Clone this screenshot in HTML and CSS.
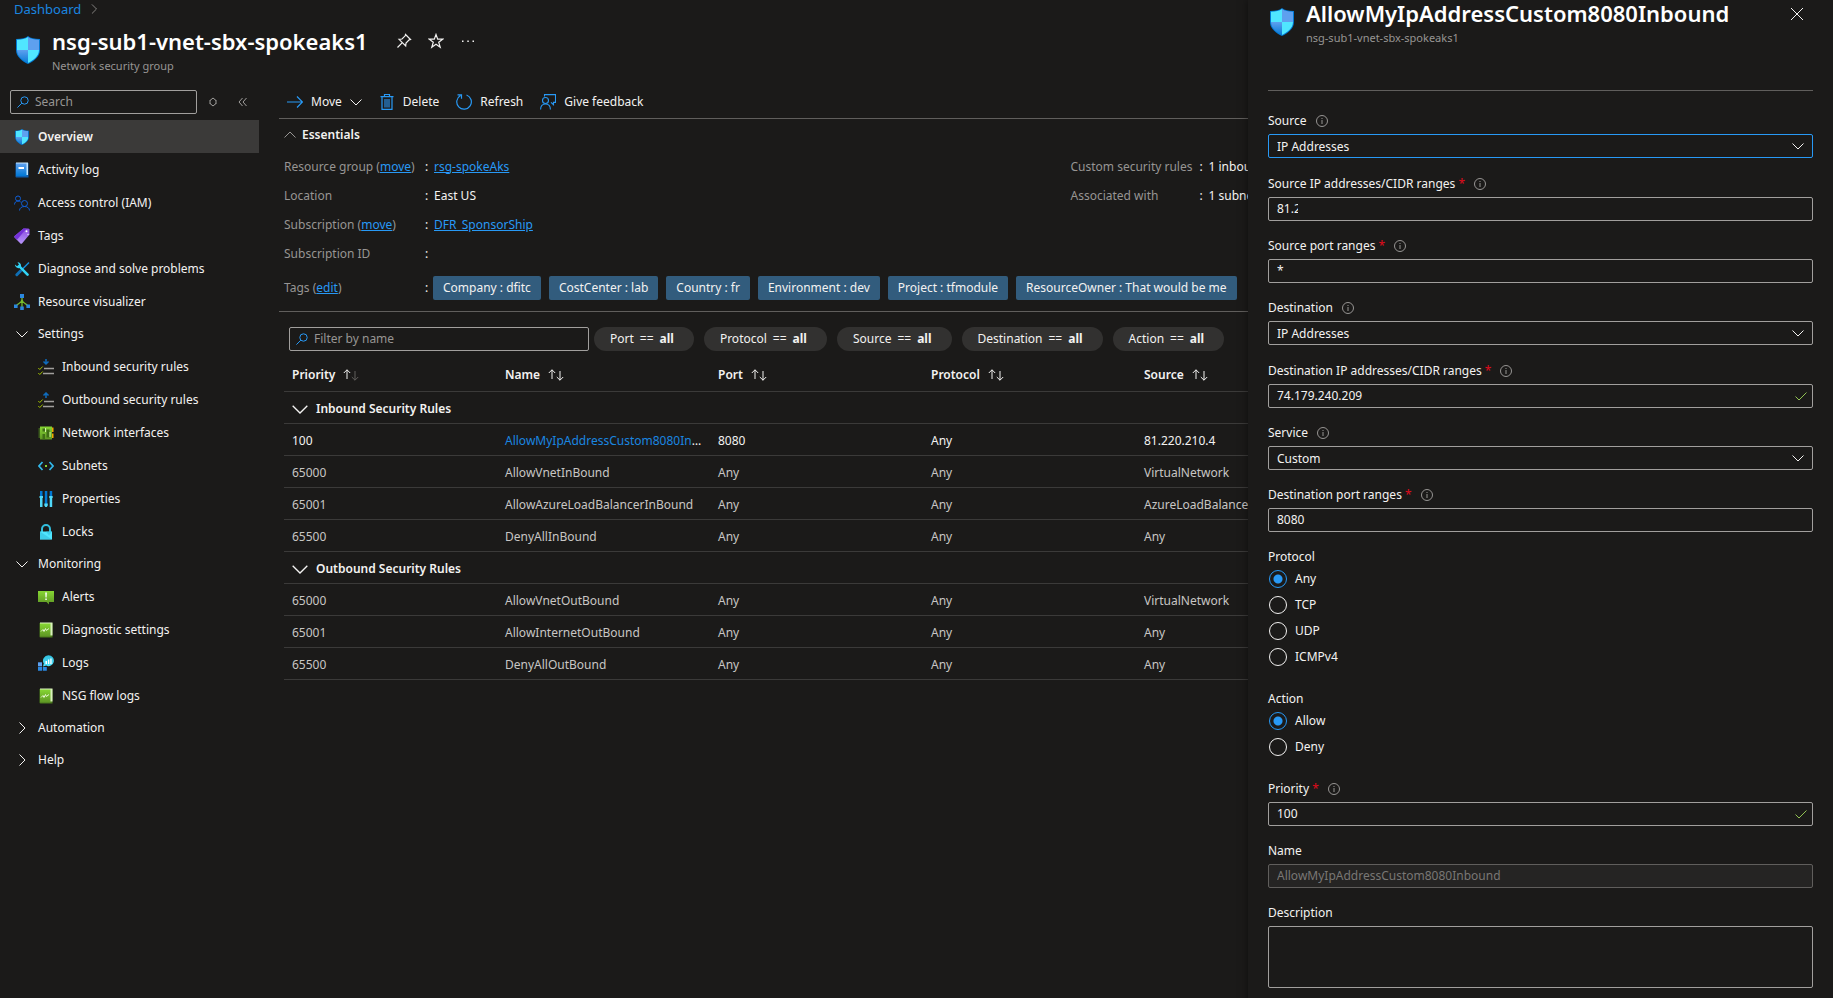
FILE: index.html
```html
<!DOCTYPE html>
<html lang="en">
<head>
    <meta charset="UTF-8">
    <title>nsg-sub1-vnet-sbx-spokeaks1</title>
    <link rel="stylesheet" href="styles.css">
</head>
<body>
<!-- icon sprite -->
<svg class="sprite" aria-hidden="true">
    <defs>
        <linearGradient id="g-blue" x1="0" y1="0" x2="0" y2="1">
            <stop offset="0" stop-color="#5ea0ef"/><stop offset="1" stop-color="#0078d4"/>
        </linearGradient>
        <linearGradient id="g-green" x1="0" y1="0" x2="0" y2="1">
            <stop offset="0" stop-color="#86d633"/><stop offset="1" stop-color="#5e9624"/>
        </linearGradient>
        <linearGradient id="g-purple" x1="0" y1="0" x2="0" y2="1">
            <stop offset="0" stop-color="#8a4be0"/><stop offset="1" stop-color="#b796f9"/>
        </linearGradient>
        <linearGradient id="g-cyan" x1="0" y1="0" x2="0" y2="1">
            <stop offset="0" stop-color="#32bedd"/><stop offset="1" stop-color="#50e6ff"/>
        </linearGradient>
        <clipPath id="shield-clip">
            <path d="M12 1c2.600 2 6 2.600 11 2.700V14c0 6.500-6 10.500-11 13C7 24.500 1 20.500 1 14V3.700C6 3.600 9.400 3 12 1z"/>
        </clipPath>
    </defs>
    <symbol id="i-shield" viewBox="0 0 24 28">
        <path fill="#0078d4" d="M12 0c2.700 2.200 6.300 2.900 12 3v11c0 7-6.500 11.300-12 14C6.500 25.300 0 21 0 14V3c5.700-.1 9.300-.8 12-3z"/>
        <g clip-path="url(#shield-clip)">
            <path fill="#50e6ff" d="M0 0h12v14H0z"/>
            <path fill="#5ea0ef" d="M12 0h12v14H12z"/>
            <path fill="url(#g-blue)" d="M0 14h12v14H0z"/>
            <path fill="#50e6ff" d="M12 14h12v14H12z"/>
        </g>
    </symbol>
    <symbol id="i-book" viewBox="0 0 16 16">
        <path fill="#0f5fb0" d="M1.500 1h13v14.500h-12a1 1 0 0 1-1-1z"/>
        <path fill="#c3e4fb" d="M2 .5h12V13H2z"/>
        <path fill="url(#g-blue)" d="M2 1.500h10.500V14H2z"/>
        <path fill="#fff" d="M4.500 5h5.500v2H4.500z"/>
    </symbol>
    <symbol id="i-people" viewBox="0 0 16 16">
        <g fill="none" stroke="#0f5fd8">
            <circle cx="4" cy="3.500" r="2.500"/><path d="M.5 9.500C.5 7.500 2 6 4 6c1.200 0 2 .4 2.700 1"/>
            <circle cx="10.500" cy="8.500" r="3"/><path d="M5.500 15.500c0-2.400 2.200-4 5-4s5 1.600 5 4"/>
        </g>
    </symbol>
    <symbol id="i-tag" viewBox="0 0 16 16">
        <path fill="url(#g-purple)" d="M9.500.5h5l1 1v5L8 15.500a1.200 1.200 0 0 1-1.600 0L.6 9.600a1.200 1.200 0 0 1 0-1.600z"/>
        <path fill="#7431d8" d="M9.500.5h3L3 11.700.6 9.300a1 1 0 0 1 0-1.300z"/>
        <circle cx="12.500" cy="3.300" r="1" fill="#fff"/><circle cx="14" cy="6.500" r=".7" fill="#e4d8fb"/>
    </symbol>
    <symbol id="i-tools" viewBox="0 0 16 16">
        <path stroke="#1490df" stroke-width="1.500" d="M15 1.500L8 8.500"/>
        <path stroke="#0f6fb5" stroke-width="3" stroke-linecap="round" d="M6.500 10L2.800 13.700"/>
        <path fill="#32d4f5" d="M1 3.500l2 1.700L5 3.500 3.500 1.200A3.400 3.400 0 0 1 7 5.300l7.500 7.400a1.300 1.300 0 0 1-1.900 1.900L5.300 7A3.400 3.400 0 0 1 1 3.500z"/>
    </symbol>
    <symbol id="i-tree" viewBox="0 0 16 16">
        <path fill="none" stroke="#76bc2d" stroke-width="1.300" d="M8 3v10M8 5.500C7.500 9 5 9 2.500 11.500M8 5.500C8.500 9 11 9 13.500 11.500"/>
        <path fill="#2b88e0" d="M6 0h4v4H6zM0 10.500h3.600v3.600H0zM6.200 12.400h3.600V16H6.200zM12.400 10.500H16v3.600h-3.600z"/>
    </symbol>
    <symbol id="i-inbound" viewBox="0 0 16 16">
        <path stroke="#0f6cbd" stroke-width="1.500" fill="none" d="M8 0v5M5.500 2.500L8 5l2.500-2.500"/>
        <path stroke="#a19f9d" stroke-width="1.300" d="M6 9.500h10M5 14.500h11"/>
        <path stroke="#a4c400" fill="none" d="M.3 9l1.500 1.500L4.700 7.500M.3 14l1.500 1.500 2.900-3"/>
    </symbol>
    <symbol id="i-outbound" viewBox="0 0 16 16">
        <path stroke="#0f6cbd" stroke-width="1.500" fill="none" d="M8 6V1M5.500 3.500L8 1l2.500 2.500"/>
        <path stroke="#a19f9d" stroke-width="1.300" d="M6 9.500h10M5 14.500h11"/>
        <path stroke="#a4c400" fill="none" d="M.3 9l1.500 1.500L4.700 7.500M.3 14l1.500 1.500 2.900-3"/>
    </symbol>
    <symbol id="i-nic" viewBox="0 0 16 16">
        <path fill="#3b5a1c" d="M.5 3h1.500v10H.5z"/>
        <path fill="#f2a900" d="M13 2.500h2.500V7H13zM13 8.500h2.500V13H13z"/>
        <path fill="url(#g-green)" d="M2 1.500h12v13H2z"/>
        <path fill="#3f6f16" d="M4.500 3.500H7v3H4.500zM8.500 4.500h3v8h-3zM4.500 9H7v5.500H4.500z"/>
        <path stroke="#d7f5a8" d="M7.500 3v4M12 7v5"/>
    </symbol>
    <symbol id="i-subnet" viewBox="0 0 16 16">
        <path fill="none" stroke="#32b8ea" stroke-width="1.700" d="M4.500 4L1 8l3.500 4M11.500 4L15 8l-3.500 4"/>
        <path fill="#86d633" d="M7 7h2v2H7z"/>
    </symbol>
    <symbol id="i-props" viewBox="0 0 16 16">
        <path fill="#0078d4" d="M2 0h2.500v5H2zM6.800 0h2.500v13H6.800zM11.700 0h2.500v5h-2.500z"/>
        <path fill="#50d8f8" d="M2 6h2.500v10H2zM11.700 6h2.500v10h-2.500zM1.500 5h3.500v2H1.500zM11.200 5h3.500v2h-3.500zM6.300 12.500h3.500v2l-1 1.500H7.300l-1-1.500z"/>
    </symbol>
    <symbol id="i-lock" viewBox="0 0 16 16">
        <path fill="none" stroke="#32bedd" stroke-width="2" d="M4 8V5a4 4 0 0 1 8 0v3"/>
        <path fill="#50e6ff" d="M2 7.500h12v8H2z"/>
        <path fill="#32bedd" d="M2 7.500l12 8H2zM14 7.500h-6l3 4z" opacity=".6"/>
    </symbol>
    <symbol id="i-alert" viewBox="0 0 16 16">
        <path fill="url(#g-green)" d="M0 2h16v11h-5v2.500L8.500 13H0z"/>
        <path fill="#fff" d="M7.200 3.500h1.700l-.3 5h-1.100zM7.300 9.500h1.500V11H7.300z"/>
    </symbol>
    <symbol id="i-diag" viewBox="0 0 16 16">
        <path fill="#4b7a1d" d="M1.500 1h13v14.500h-12a1 1 0 0 1-1-1z"/>
        <path fill="#d9f0bd" d="M2 .5h12.500v13H2z"/>
        <path fill="url(#g-green)" d="M2 1.500h10.500v13H2z"/>
        <path fill="none" stroke="#e6f7d0" d="M3 9.500l2-2 1 2 1.500-3 .8 2L11 6.500"/>
    </symbol>
    <symbol id="i-logs" viewBox="0 0 16 16">
        <path fill="#2b88e0" d="M0 7.500h4v3.700H0zM0 12h4v3.700H0zM4.800 12h4v3.700h-4z"/>
        <path fill="#5ea0ef" d="M0 7.500h4v3.700H0z"/>
        <path fill="url(#g-cyan)" d="M10.500.3a5.400 5.400 0 1 1-2.300 10.300L5 11.500l.8-3A5.400 5.400 0 0 1 10.500.3z"/>
        <path fill="#fff" d="M7.500 6H9v3H7.500zM10 4.500h1.300V9H10zM12.300 3.500h1.300V9h-1.300z"/>
    </symbol>
    <symbol id="i-down" viewBox="0 0 12 12"><path fill="none" stroke="currentColor" d="M.5 3.500L6 9l5.500-5.500"/></symbol>
    <symbol id="i-up" viewBox="0 0 12 12"><path fill="none" stroke="currentColor" d="M.5 8.500L6 3l5.500 5.500"/></symbol>
    <symbol id="i-right" viewBox="0 0 12 12"><path fill="none" stroke="currentColor" d="M3.500.5L9 6l-5.500 5.500"/></symbol>
    <symbol id="i-search" viewBox="0 0 12 12">
        <g fill="none" stroke="#2899f5"><circle cx="7.500" cy="4.500" r="3.700"/><path d="M4.800 7.200L.4 11.600"/></g>
    </symbol>
    <symbol id="i-pin" viewBox="0 0 16 16">
        <path fill="none" stroke="currentColor" stroke-width="1.200" d="M9.500 1.500l5 5-1.300.3-3.200 3.200-.3 3L3 6.300l3-.3L9.200 2.800zM6.300 9.700L1.500 14.500"/>
    </symbol>
    <symbol id="i-star" viewBox="0 0 16 16">
        <path fill="none" stroke="currentColor" stroke-width="1.200" d="M8 1.500l1.700 4.700h5L10.700 9.200l1.500 5L8 11.200l-4.200 3 1.500-5-4-3h5z"/>
    </symbol>
    <symbol id="i-more" viewBox="0 0 16 16">
        <path fill="currentColor" d="M2 7.500h1.500V9H2zM7.300 7.500h1.500V9H7.300zM12.500 7.500H14V9h-1.500z"/>
    </symbol>
    <symbol id="i-sort" viewBox="0 0 12 12"><path fill="none" stroke="currentColor" d="M3 4.500L6 2l3 2.500M3 7.500L6 10l3-2.500M3 4v4M9 4v4"/></symbol>
    <symbol id="i-collapse" viewBox="0 0 12 12"><path fill="none" stroke="currentColor" d="M5.500 2L2 6l3.500 4M9.500 2L6 6l3.500 4"/></symbol>
    <symbol id="i-arrow" viewBox="0 0 16 16"><path fill="none" stroke="#2899f5" stroke-width="1.200" d="M0 8h15.500M10 2.500L15.500 8 10 13.500"/></symbol>
    <symbol id="i-trash" viewBox="0 0 16 16">
        <path fill="none" stroke="#2899f5" stroke-width="1.200" d="M1.500 2.600h13M5.500 2.500v-2h5v2M3 2.600v12.800h10V2.600"/>
        <path fill="#235f92" d="M5 5h6v8.500H5z"/>
    </symbol>
    <symbol id="i-refresh" viewBox="0 0 16 16">
        <path fill="none" stroke="#2899f5" stroke-width="1.200" d="M10.500 1A7.300 7.300 0 1 1 4.500 1.500M1.500.8h4v4"/>
    </symbol>
    <symbol id="i-feedback" viewBox="0 0 16 16">
        <g fill="none" stroke="#2899f5" stroke-width="1.100">
            <circle cx="5.500" cy="6.500" r="3"/><path d="M.6 15.500c0-3.300 2-5.500 4.900-5.500s4.900 2.200 4.900 5.500"/>
            <path d="M4.500 2.500V.6h11v7.800h-2v2.300L11 8.400"/>
        </g>
    </symbol>
    <symbol id="i-updown" viewBox="0 0 16 12">
        <path fill="none" stroke="currentColor" d="M4 10V.8M.8 4L4 .8 7.200 4"/>
        <path fill="none" stroke="currentColor" d="M12 2v9.200M8.800 8l3.200 3.200L15.200 8"/>
    </symbol>
    <symbol id="i-up-only" viewBox="0 0 16 12">
        <path fill="none" stroke="currentColor" d="M4 10V.8M.8 4L4 .8 7.200 4"/>
        <path fill="none" stroke="#605e5c" d="M12 2v9.200M8.800 8l3.200 3.200L15.200 8"/>
    </symbol>
    <symbol id="i-info" viewBox="0 0 12 12">
        <circle cx="6" cy="6" r="5.500" fill="none" stroke="currentColor"/><path stroke="currentColor" d="M6 5v4M6 3v1"/>
    </symbol>
    <symbol id="i-check" viewBox="0 0 12 12"><path fill="none" stroke="#92c353" d="M.5 6.500L4 10l7.500-7.500"/></symbol>
    <symbol id="i-close" viewBox="0 0 12 12"><path fill="none" stroke="currentColor" d="M0 0l12 12M12 0L0 12"/></symbol>
</svg>

<div class="portal">
    <div class="blade">
        <nav class="breadcrumb" aria-label="Breadcrumb">
            <a href="#">Dashboard</a>
            <svg class="icon-10"><use href="#i-right"/></svg>
        </nav>
        <header class="blade-header">
            <svg class="shield"><use href="#i-shield"/></svg>
            <div>
                <div class="title-row">
                    <h1>nsg-sub1-vnet-sbx-spokeaks1</h1>
                    <button type="button" aria-label="Pin"><svg class="icon-16"><use href="#i-pin"/></svg></button>
                    <button type="button" aria-label="Favorite"><svg class="icon-16"><use href="#i-star"/></svg></button>
                    <button type="button" aria-label="More"><svg class="icon-16"><use href="#i-more"/></svg></button>
                </div>
                <p class="subtitle">Network security group</p>
            </div>
        </header>

        <div class="blade-body">
            <aside class="sidebar">
                <div class="menu-search">
                    <label class="search-box">
                        <svg class="icon-12"><use href="#i-search"/></svg>
                        <input type="search" placeholder="Search" aria-label="Search menu">
                    </label>
                    <button type="button" aria-label="Expand all"><svg class="icon-12"><use href="#i-sort"/></svg></button>
                    <button type="button" aria-label="Collapse menu"><svg class="icon-12"><use href="#i-collapse"/></svg></button>
                </div>
                <ul class="menu">
                    <li><a class="item active" href="#"><svg class="icon-16"><use href="#i-shield"/></svg>Overview</a></li>
                    <li><a class="item" href="#"><svg class="icon-16"><use href="#i-book"/></svg>Activity log</a></li>
                    <li><a class="item" href="#"><svg class="icon-16"><use href="#i-people"/></svg>Access control (IAM)</a></li>
                    <li><a class="item" href="#"><svg class="icon-16"><use href="#i-tag"/></svg>Tags</a></li>
                    <li><a class="item" href="#"><svg class="icon-16"><use href="#i-tools"/></svg>Diagnose and solve problems</a></li>
                    <li><a class="item" href="#"><svg class="icon-16"><use href="#i-tree"/></svg>Resource visualizer</a></li>
                    <li><button type="button" class="group"><svg class="icon-12"><use href="#i-down"/></svg>Settings</button></li>
                    <li><a class="item sub" href="#"><svg class="icon-16"><use href="#i-inbound"/></svg>Inbound security rules</a></li>
                    <li><a class="item sub" href="#"><svg class="icon-16"><use href="#i-outbound"/></svg>Outbound security rules</a></li>
                    <li><a class="item sub" href="#"><svg class="icon-16"><use href="#i-nic"/></svg>Network interfaces</a></li>
                    <li><a class="item sub" href="#"><svg class="icon-16"><use href="#i-subnet"/></svg>Subnets</a></li>
                    <li><a class="item sub" href="#"><svg class="icon-16"><use href="#i-props"/></svg>Properties</a></li>
                    <li><a class="item sub" href="#"><svg class="icon-16"><use href="#i-lock"/></svg>Locks</a></li>
                    <li><button type="button" class="group"><svg class="icon-12"><use href="#i-down"/></svg>Monitoring</button></li>
                    <li><a class="item sub" href="#"><svg class="icon-16"><use href="#i-alert"/></svg>Alerts</a></li>
                    <li><a class="item sub" href="#"><svg class="icon-16"><use href="#i-diag"/></svg>Diagnostic settings</a></li>
                    <li><a class="item sub" href="#"><svg class="icon-16"><use href="#i-logs"/></svg>Logs</a></li>
                    <li><a class="item sub" href="#"><svg class="icon-16"><use href="#i-diag"/></svg>NSG flow logs</a></li>
                    <li><button type="button" class="group"><svg class="icon-12"><use href="#i-right"/></svg>Automation</button></li>
                    <li><button type="button" class="group"><svg class="icon-12"><use href="#i-right"/></svg>Help</button></li>
                </ul>
            </aside>

            <main class="content">
                <div class="content-inner">
                    <div class="toolbar">
                        <button type="button"><svg class="icon-16"><use href="#i-arrow"/></svg>Move<svg class="icon-12"><use href="#i-down"/></svg></button>
                        <button type="button"><svg class="icon-16"><use href="#i-trash"/></svg>Delete</button>
                        <button type="button"><svg class="icon-16"><use href="#i-refresh"/></svg>Refresh</button>
                        <button type="button"><svg class="icon-16"><use href="#i-feedback"/></svg>Give feedback</button>
                    </div>

                    <section class="essentials">
                        <button type="button" class="essentials-toggle"><svg class="icon-12"><use href="#i-up"/></svg>Essentials</button>
                        <div class="essentials-grid">
                            <dl>
                                <dt>Resource group (<a href="#">move</a>)</dt><dd><a href="#">rsg-spokeAks</a></dd>
                                <dt>Location</dt><dd>East US</dd>
                                <dt>Subscription (<a href="#">move</a>)</dt><dd><a href="#">DFR_SponsorShip</a></dd>
                                <dt>Subscription ID</dt><dd></dd>
                            </dl>
                            <dl>
                                <dt>Custom security rules</dt><dd>1 inbound</dd>
                                <dt>Associated with</dt><dd>1 subnets</dd>
                            </dl>
                        </div>
                        <dl class="tags">
                            <dt>Tags (<a href="#">edit</a>)</dt>
                            <dd>
                                <span class="tag">Company : dfitc</span>
                                <span class="tag">CostCenter : lab</span>
                                <span class="tag">Country : fr</span>
                                <span class="tag">Environment : dev</span>
                                <span class="tag">Project : tfmodule</span>
                                <span class="tag">ResourceOwner : That would be me</span>
                            </dd>
                        </dl>
                    </section>

                    <div class="filters">
                        <label class="search-box">
                            <svg class="icon-12"><use href="#i-search"/></svg>
                            <input type="search" placeholder="Filter by name" aria-label="Filter by name">
                        </label>
                        <div class="pills">
                            <button type="button"><span>Port</span> <span>==</span> <b>all</b></button>
                            <button type="button"><span>Protocol</span> <span>==</span> <b>all</b></button>
                            <button type="button"><span>Source</span> <span>==</span> <b>all</b></button>
                            <button type="button"><span>Destination</span> <span>==</span> <b>all</b></button>
                            <button type="button"><span>Action</span> <span>==</span> <b>all</b></button>
                        </div>
                    </div>

                    <table class="rules">
                        <thead>
                            <tr>
                                <th>Priority<svg class="updown"><use href="#i-up-only"/></svg></th>
                                <th>Name<svg class="updown"><use href="#i-updown"/></svg></th>
                                <th>Port<svg class="updown"><use href="#i-updown"/></svg></th>
                                <th>Protocol<svg class="updown"><use href="#i-updown"/></svg></th>
                                <th>Source<svg class="updown"><use href="#i-updown"/></svg></th>
                            </tr>
                        </thead>
                        <tbody>
                            <tr class="rule-group"><th colspan="5"><svg class="icon-16"><use href="#i-down"/></svg>Inbound Security Rules</th></tr>
                            <tr class="custom"><td>100</td><td><a href="#">AllowMyIpAddressCustom8080Inbound</a></td><td>8080</td><td>Any</td><td>81.220.210.4</td></tr>
                            <tr><td>65000</td><td>AllowVnetInBound</td><td>Any</td><td>Any</td><td>VirtualNetwork</td></tr>
                            <tr><td>65001</td><td>AllowAzureLoadBalancerInBound</td><td>Any</td><td>Any</td><td>AzureLoadBalancer</td></tr>
                            <tr><td>65500</td><td>DenyAllInBound</td><td>Any</td><td>Any</td><td>Any</td></tr>
                        </tbody>
                        <tbody>
                            <tr class="rule-group"><th colspan="5"><svg class="icon-16"><use href="#i-down"/></svg>Outbound Security Rules</th></tr>
                            <tr><td>65000</td><td>AllowVnetOutBound</td><td>Any</td><td>Any</td><td>VirtualNetwork</td></tr>
                            <tr><td>65001</td><td>AllowInternetOutBound</td><td>Any</td><td>Any</td><td>Any</td></tr>
                            <tr><td>65500</td><td>DenyAllOutBound</td><td>Any</td><td>Any</td><td>Any</td></tr>
                        </tbody>
                    </table>
                </div>
            </main>
        </div>
    </div>

    <aside class="panel">
        <header class="panel-header">
            <svg class="shield"><use href="#i-shield"/></svg>
            <div class="panel-title">
                <h2>AllowMyIpAddressCustom8080Inbound</h2>
                <p class="subtitle">nsg-sub1-vnet-sbx-spokeaks1</p>
            </div>
            <button type="button" aria-label="Close"><svg class="icon-12"><use href="#i-close"/></svg></button>
        </header>
        <form class="rule-form">
            <div class="field field-select">
                <label for="source">Source<svg class="icon-12"><use href="#i-info"/></svg></label>
                <div class="control">
                    <select id="source" class="focused"><option>IP Addresses</option></select>
                    <svg class="icon-12"><use href="#i-down"/></svg>
                </div>
            </div>
            <div class="field">
                <label for="source-ip">Source IP addresses/CIDR ranges <i>*</i><svg class="icon-12"><use href="#i-info"/></svg></label>
                <div class="control"><input id="source-ip" class="masked" type="text" value="81.2"></div>
            </div>
            <div class="field">
                <label for="source-port">Source port ranges <i>*</i><svg class="icon-12"><use href="#i-info"/></svg></label>
                <div class="control"><input id="source-port" type="text" value="*"></div>
            </div>
            <div class="field field-select">
                <label for="destination">Destination<svg class="icon-12"><use href="#i-info"/></svg></label>
                <div class="control">
                    <select id="destination"><option>IP Addresses</option></select>
                    <svg class="icon-12"><use href="#i-down"/></svg>
                </div>
            </div>
            <div class="field">
                <label for="destination-ip">Destination IP addresses/CIDR ranges <i>*</i><svg class="icon-12"><use href="#i-info"/></svg></label>
                <div class="control valid">
                    <input id="destination-ip" type="text" value="74.179.240.209">
                    <svg class="icon-12"><use href="#i-check"/></svg>
                </div>
            </div>
            <div class="field">
                <label for="service">Service<svg class="icon-12"><use href="#i-info"/></svg></label>
                <div class="control">
                    <select id="service"><option>Custom</option></select>
                    <svg class="icon-12"><use href="#i-down"/></svg>
                </div>
            </div>
            <div class="field">
                <label for="destination-port">Destination port ranges <i>*</i><svg class="icon-12"><use href="#i-info"/></svg></label>
                <div class="control"><input id="destination-port" type="text" value="8080"></div>
            </div>
            <fieldset class="field">
                <legend>Protocol</legend>
                <label class="radio"><input type="radio" name="protocol" checked>Any</label>
                <label class="radio"><input type="radio" name="protocol">TCP</label>
                <label class="radio"><input type="radio" name="protocol">UDP</label>
                <label class="radio"><input type="radio" name="protocol">ICMPv4</label>
            </fieldset>
            <fieldset class="field">
                <legend>Action</legend>
                <label class="radio"><input type="radio" name="action" checked>Allow</label>
                <label class="radio"><input type="radio" name="action">Deny</label>
            </fieldset>
            <div class="field">
                <label for="priority">Priority <i>*</i><svg class="icon-12"><use href="#i-info"/></svg></label>
                <div class="control valid">
                    <input id="priority" type="text" value="100">
                    <svg class="icon-12"><use href="#i-check"/></svg>
                </div>
            </div>
            <div class="field">
                <label for="name">Name</label>
                <div class="control"><input id="name" type="text" value="AllowMyIpAddressCustom8080Inbound" disabled></div>
            </div>
            <div class="field">
                <label for="description">Description</label>
                <textarea id="description"></textarea>
            </div>
        </form>
    </aside>
</div>
</body>
</html>
```

FILE: styles.css
```css
:root {
    --bg: #1b1a19;
    --text: #f3f2f1;
    --muted: #979593;
    --link: #2899f5;
    --link-plain: #1a86e0;
    --border: #605e5c;
    --row-border: #3b3a39;
    --input-border: #a19f9d;
    --panel-width: 585px;
}

* {
    box-sizing: border-box;
}

body {
    margin: 0;
    background: var(--bg);
    color: var(--text);
    font-family: "Noto Sans", "Open Sans", sans-serif;
    font-size: 12px;
    line-height: 18px;
}

h1, h2, p, ul, dl, dd, fieldset {
    margin: 0;
    padding: 0;
    border: 0;
}

a {
    color: var(--link);
}

button, input, select, textarea {
    font: inherit;
    color: inherit;
    background: none;
    border: 0;
    padding: 0;
    margin: 0;
}

button {
    display: flex;
    align-items: center;
}

svg {
    flex: none;
}

.sprite {
    position: absolute;
    width: 0;
    height: 0;
}

.icon-10 {
    width: 10px;
    height: 10px;
}

.icon-12 {
    width: 12px;
    height: 12px;
}

.icon-16 {
    width: 16px;
    height: 16px;
}

.shield {
    width: 24px;
    height: 28px;
}

.portal {
    display: grid;
    grid-template-columns: minmax(0, 1fr) var(--panel-width);
    min-height: 100vh;
}

/* blade */
.breadcrumb {
    display: flex;
    align-items: center;
    gap: 8px;
    padding-left: 14px;
}

.breadcrumb a {
    color: var(--link-plain);
    font-size: 13px;
    text-decoration: none;
}

.breadcrumb svg {
    color: var(--muted);
}

.blade-header {
    display: flex;
    gap: 12px;
    height: 66px;
    padding: 10px 16px 0;
}

.blade-header .shield {
    margin-top: 8px;
}

.title-row {
    display: flex;
    align-items: center;
    gap: 16px;
}

.title-row h1 {
    margin-right: 12px;
}

h1, h2 {
    font-size: 22px;
    font-weight: 600;
    line-height: 26px;
    color: #fff;
}

.subtitle {
    margin-top: 3px;
    font-size: 11px;
    color: var(--muted);
}

.blade-body {
    display: flex;
}

/* left menu */
.sidebar {
    flex: none;
    width: 259px;
}

.search-box {
    display: flex;
    align-items: center;
    gap: 6px;
    height: 24px;
    padding: 0 6px;
    border: 1px solid var(--input-border);
    border-radius: 2px;
}

.search-box input {
    flex: 1;
    min-width: 0;
    outline: none;
}

.search-box input::placeholder {
    color: var(--muted);
}

.menu-search {
    display: flex;
    align-items: center;
    gap: 10px;
    height: 36px;
    padding-left: 10px;
    color: var(--input-border);
}

.menu-search .search-box {
    width: 187px;
}

.menu-search button + button {
    margin-left: 8px;
}

.menu {
    list-style: none;
}

.menu .item, .menu .group {
    display: flex;
    align-items: center;
    width: 100%;
    color: var(--text);
    text-decoration: none;
}

.menu .item {
    gap: 8px;
    height: 33px;
    padding: 1px 0 0 14px;
}

.menu .sub {
    padding-left: 38px;
}

.menu .active {
    background: var(--row-border);
    font-weight: 600;
}

.menu .group {
    gap: 10px;
    height: 32px;
    padding-left: 16px;
}

/* content: the wide inner area runs on under the context panel */
.content {
    flex: 1;
    min-width: 0;
    padding-left: 20px;
    overflow: hidden;
}

.content-inner {
    width: calc(100% + var(--panel-width));
}

.toolbar {
    display: flex;
    gap: 17px;
    height: 35px;
    padding: 2px 0 0 8px;
    border-bottom: 1px solid var(--border);
}

.toolbar button {
    gap: 8px;
}

.essentials {
    padding: 7px 0 6px 5px;
    border-bottom: 1px solid var(--border);
}

.essentials-toggle {
    gap: 6px;
    font-weight: 600;
}

.essentials-toggle svg {
    color: var(--muted);
}

.essentials-grid {
    display: grid;
    grid-template-columns: 1fr 1fr;
    gap: 24px;
    padding-top: 8px;
}

dl {
    display: grid;
    grid-template-columns: 141px 1fr;
    grid-auto-rows: 29px;
    align-items: center;
    align-content: start;
}

.essentials-grid dl + dl {
    grid-template-columns: 129px 1fr;
}

dt {
    color: var(--muted);
}

dd {
    display: flex;
    align-items: center;
    gap: 8px;
}

dd::before {
    content: ":";
    width: 1px;
    color: var(--text);
}

dl.tags {
    grid-auto-rows: 34px;
    padding-top: 3px;
}

.tags dd::before {
    width: 0;
}

.tag {
    padding: 3px 10px;
    border-radius: 2px;
    background: #325c7d;
}

.filters {
    display: flex;
    gap: 5px;
    padding: 15px 0 0 10px;
}

.filters .search-box {
    width: 300px;
}

.pills {
    display: flex;
    gap: 10px;
}

.pills button {
    gap: 6px;
    height: 24px;
    padding: 0 20px 0 16px;
    border-radius: 12px;
    background: #323130;
}

.rules {
    width: calc(100% - 5px);
    margin: 8px 0 0 5px;
    border-collapse: collapse;
    table-layout: fixed;
}

.rules th, .rules td {
    height: 32px;
    padding: 0 8px;
    border-bottom: 1px solid var(--row-border);
    text-align: left;
    white-space: nowrap;
    overflow: hidden;
    text-overflow: ellipsis;
}

.rules tbody th, .rules td {
    padding-top: 3px;
}

.rules th {
    width: 213px;
    font-weight: 600;
}

.rules th:last-child {
    width: auto;
}

.rules td {
    color: #c8c6c4;
}

.rules .custom td {
    color: var(--text);
}

.rules a {
    color: var(--link-plain);
    text-decoration: none;
}

.updown {
    width: 16px;
    height: 12px;
    margin-left: 8px;
    vertical-align: -2px;
}

.rule-group svg {
    margin-right: 8px;
    vertical-align: -4px;
}

/* context panel */
.panel {
    padding: 0 20px;
    box-shadow: 0 0 8px rgba(0, 0, 0, .5);
}

.panel-header {
    display: flex;
    gap: 12px;
    height: 91px;
    border-bottom: 1px solid var(--border);
}

.panel-header .shield {
    margin: 8px 0 0 2px;
}

.panel-title {
    flex: 1;
}

.panel-header button {
    height: 28px;
    margin-right: 10px;
}

.rule-form {
    padding-top: 21px;
}

.field {
    margin-bottom: 16px;
}

.field-select {
    margin-bottom: 17px;
}

.field > label, .field legend {
    display: flex;
    align-items: center;
    height: 18px;
    margin-bottom: 4px;
    padding: 0;
    white-space: pre;
}

.field > label i {
    color: #e00b1c;
    font-style: normal;
}

.field > label svg {
    margin-left: 9px;
    color: var(--muted);
}

.control {
    position: relative;
}

.control input, .control select, textarea {
    display: block;
    width: 100%;
    height: 24px;
    padding: 0 8px 1px;
    border: 1px solid var(--input-border);
    border-radius: 2px;
    outline: none;
    appearance: none;
}

.control select {
    padding: 2px 8px 0;
}

.control .focused {
    border-color: var(--link);
}

/* only the first characters of the address stay visible */
.control .masked {
    padding-right: calc(100% - 31px);
}

.control input:disabled {
    border-color: var(--border);
    background: #252423;
    color: #797775;
}

.control svg {
    position: absolute;
    top: 6px;
    right: 9px;
    pointer-events: none;
}

.control.valid svg {
    right: 6px;
}

textarea {
    height: 62px;
    resize: none;
}

.field > .radio {
    gap: 8px;
    margin-bottom: 8px;
    padding-left: 1px;
}

.radio input {
    width: 18px;
    height: 18px;
    border: 1px solid var(--text);
    border-radius: 50%;
    appearance: none;
}

.radio input:checked {
    border-color: var(--link);
    background: radial-gradient(circle, var(--link) 4px, transparent 5px);
}
```
